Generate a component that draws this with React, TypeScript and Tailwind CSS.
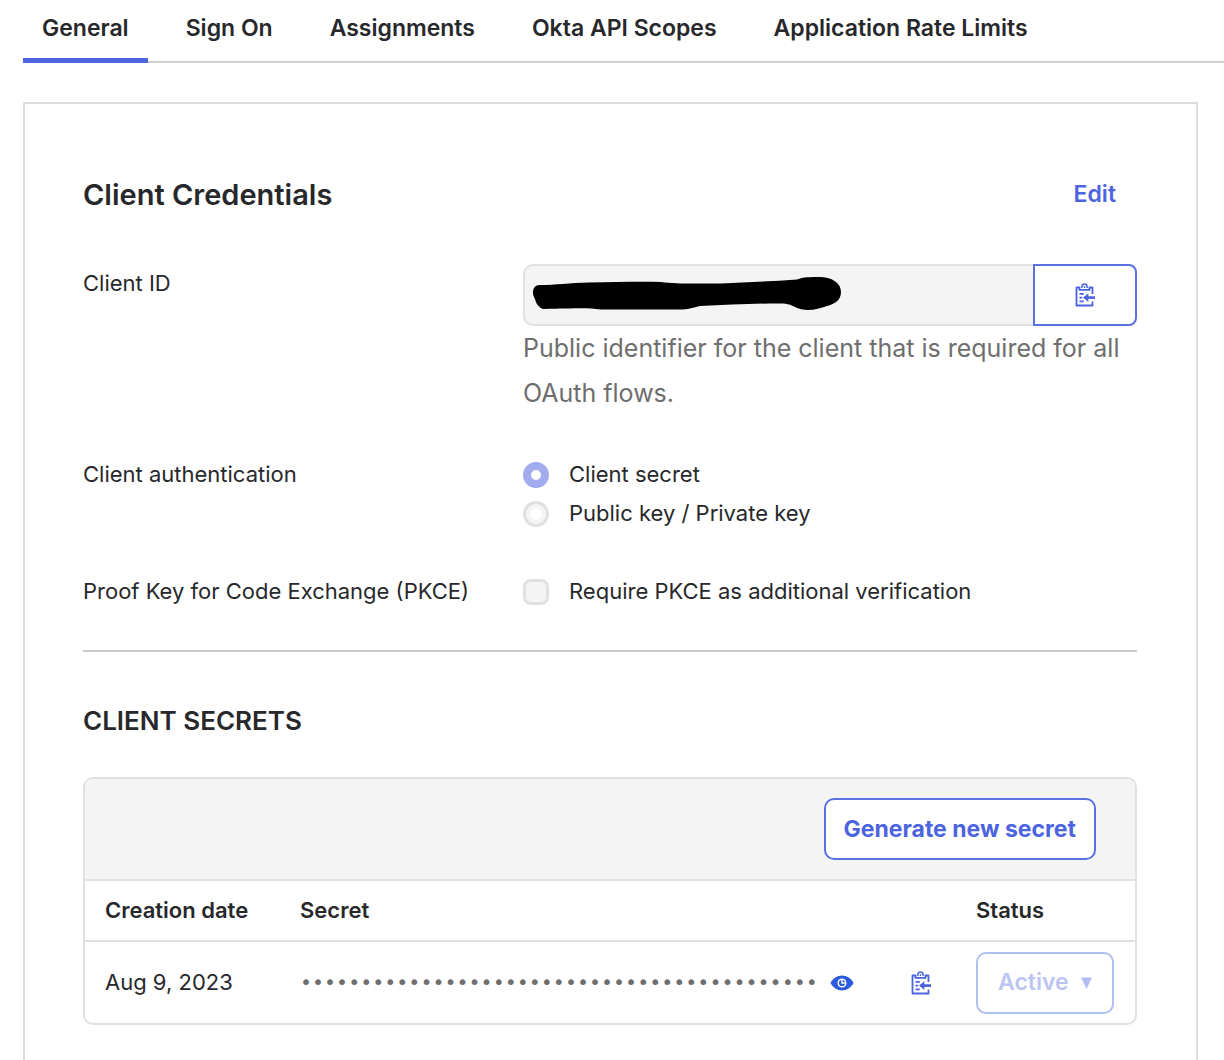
import React from "react";

const tabs = ["General", "Sign On", "Assignments", "Okta API Scopes", "Application Rate Limits"];

function ClipboardIcon() {
  return (
    <svg width="20" height="24" viewBox="0 0 20 24" fill="none" stroke="#4c64e0" aria-hidden="true">
      <path d="M4.500 4.500H1.500V22.500H17.500V18.500M17.500 11V4.500H14.500" strokeWidth="1.8" strokeLinejoin="round" />
      <path d="M4.500 3.800V6.900H14.500V3.800" strokeWidth="1.8" />
      <path d="M6.900 5V3.600A2.600 2.600 0 0 1 12.100 3.600V5" strokeWidth="1.500" />
      <circle cx="9.500" cy="4" r="0.9" fill="#4c64e0" stroke="none" />
      <path d="M4.500 10.800H8.800M4.500 14.600H7.200M4.500 18.400H8.800" strokeWidth="1.700" />
      <path d="M12 14.600H20" strokeWidth="2.600" />
      <path d="M8 14.600L13.400 10.200V19Z" fill="#4c64e0" stroke="none" />
    </svg>
  );
}

function EyeIcon() {
  return (
    <svg width="24" height="16" viewBox="0 0 24 16" aria-hidden="true">
      <path d="M0.5 8C3 3.4 7 0.6 12 0.6S21 3.4 23.5 8C21 12.6 17 15.4 12 15.4S3 12.6 0.5 8Z" fill="#2a5bdc" />
      <circle cx="12" cy="8" r="3.8" fill="none" stroke="#fff" strokeWidth="1.4" />
      <path d="M12 5V8H15" fill="none" stroke="#fff" strokeWidth="1.4" />
    </svg>
  );
}

function Redaction() {
  return (
    <svg className="pointer-events-none absolute left-2 top-3" width="312" height="36" viewBox="0 0 312 36" aria-hidden="true">
      <path
        d="M9 9C25 9 38 7 58 6.500C85 6 110 5.500 130 6C145 8 160 7.500 190 7.500C215 6 240 5.500 266 3.500C272 1 280 1 288 1C301 1 310 7 310 16C310 24 304 28 296 30C286 34 273 36 264 31C258 28 256 27.500 246 27.500C220 27.500 195 29 169 30C160 32 158 33.500 148 33.500H70C55 31.500 45 32.500 12 33C7 31 5 27 4 23C2 20 1 15 3 12C4 10 6 9 9 9Z"
        fill="#000"
      />
    </svg>
  );
}

export default function App() {
  return (
    <div className="min-h-screen overflow-hidden bg-white font-['Inter',sans-serif] text-[22px] leading-[39px] text-[#27282b]">
      <nav className="ml-[23px] flex gap-[19px] border-b-2 border-[#d0d0d2] text-[23px] font-semibold">
        {tabs.map((tab, i) => (
          <a
            key={tab}
            href="#"
            aria-current={i === 0 ? "page" : undefined}
            className={
              i === 0
                ? "-mb-0.5 whitespace-nowrap border-b-5 border-[#4c64e0] px-[19px] pt-[9px] pb-[10px]"
                : "whitespace-nowrap px-[19px] pt-[9px]"
            }
          >
            {tab}
          </a>
        ))}
      </nav>

      <main className="mt-[39px] mr-[26px] ml-[23px] border-2 border-b-0 border-[#dcdce0] pt-[71px] pr-[59px] pb-20 pl-[58px]">
        <section>
          <div className="flex items-center justify-between">
            <h1 className="text-[29px] font-semibold">Client Credentials</h1>
            <button type="button" className="mr-[21px] text-[23px] font-semibold text-[#4c64e0]">Edit</button>
          </div>

          <div className="mt-[50px] grid grid-cols-[440px_1fr]">
            <label htmlFor="client-id">Client ID</label>
            <div>
              <div className="relative flex h-[62px]">
                <input
                  id="client-id"
                  readOnly
                  className="min-w-0 flex-1 rounded-l-[10px] border-2 border-r-0 border-[#e1e1e1] bg-[#f4f4f4] px-4"
                />
                <Redaction />
                <button
                  type="button"
                  aria-label="Copy client ID"
                  className="flex w-[104px] items-center justify-center rounded-r-[8px] border-2 border-[#5b70e3] bg-white"
                >
                  <ClipboardIcon />
                </button>
              </div>
              <p className="text-[25px] leading-[45px] text-[#6e6e6e]">
                Public identifier for the client that is required for all OAuth flows.
              </p>
            </div>
          </div>

          <div role="radiogroup" aria-labelledby="auth-label" className="mt-[39px] grid grid-cols-[440px_1fr]">
            <span id="auth-label">Client authentication</span>
            <div>
              <label className="flex items-center gap-5">
                <input
                  type="radio"
                  name="auth"
                  defaultChecked
                  className="size-[26px] appearance-none rounded-full border-8 border-[#a1abee] bg-white"
                />
                Client secret
              </label>
              <label className="flex items-center gap-5">
                <input
                  type="radio"
                  name="auth"
                  className="size-[26px] appearance-none rounded-full border-3 border-[#e1e1e1] bg-[radial-gradient(circle,#fff_5px,#f4f4f4_6px)]"
                />
                Public key / Private key
              </label>
            </div>
          </div>

          <div className="mt-[39px] grid grid-cols-[440px_1fr]">
            <span>Proof Key for Code Exchange (PKCE)</span>
            <label className="flex items-center gap-5">
              <input
                type="checkbox"
                className="size-[26px] appearance-none rounded-[8px] border-3 border-[#e1e1e1] bg-[#f4f4f4]"
              />
              Require PKCE as additional verification
            </label>
          </div>
        </section>

        <section className="mt-[39px] border-t-2 border-[#c9c9cb] pt-[49px]">
          <h2 className="text-[26px] font-semibold">CLIENT SECRETS</h2>
          <div className="mt-[37px] overflow-hidden rounded-[10px] border-2 border-[#e1e1e1]">
            <div className="flex justify-end border-b-2 border-[#e1e1e1] bg-[#f4f4f4] py-[19px] pr-[39px]">
              <button
                type="button"
                className="h-[62px] rounded-[10px] border-2 border-[#5b70e3] bg-white px-[18px] text-[23px] font-bold text-[#4c64e0]"
              >
                Generate new secret
              </button>
            </div>
            <table className="w-full table-fixed text-left">
              <colgroup>
                <col className="w-[195px]" />
                <col />
                <col className="w-[60px]" />
                <col className="w-[179px]" />
              </colgroup>
              <thead>
                <tr className="h-[60px] border-b-2 border-[#e1e1e1]">
                  <th className="pl-5 font-semibold">Creation date</th>
                  <th colSpan={2} className="pl-5 font-semibold">Secret</th>
                  <th className="pl-5 font-semibold">Status</th>
                </tr>
              </thead>
              <tbody>
                <tr className="h-[82px]">
                  <td className="pl-5">Aug 9, 2023</td>
                  <td className="pl-5">
                    <div className="flex items-center">
                      <input
                        type="password"
                        readOnly
                        aria-label="Client secret value"
                        defaultValue={"x".repeat(43)}
                        className="min-w-0 flex-1 font-['DejaVu_Sans_Mono',monospace] text-[20px] text-[#6e6e6e]"
                      />
                      <button type="button" aria-label="Show secret" className="mr-[42px]">
                        <EyeIcon />
                      </button>
                    </div>
                  </td>
                  <td className="pl-[15px]">
                    <button type="button" aria-label="Copy secret" className="flex">
                      <ClipboardIcon />
                    </button>
                  </td>
                  <td className="pl-5">
                    <button
                      type="button"
                      className="flex h-[62px] items-center gap-3 rounded-[10px] border-2 border-[#aebff0] bg-white px-5 text-[23px] font-semibold text-[#bcc4f4]"
                    >
                      Active
                      <svg width="11" height="12" viewBox="0 0 11 12" aria-hidden="true">
                        <path d="M0 0.500H11L5.500 12Z" fill="#b3bdf3" />
                      </svg>
                    </button>
                  </td>
                </tr>
              </tbody>
            </table>
          </div>
        </section>
      </main>
    </div>
  );
}
